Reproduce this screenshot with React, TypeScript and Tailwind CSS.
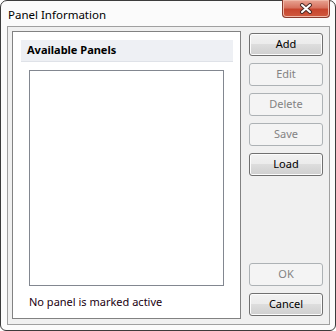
const font = { fontFamily: '"Noto Sans", "Open Sans", sans-serif' };

function Btn({ label, disabled }: { label: string; disabled?: boolean }) {
  return disabled ? (
    <div className="flex h-[23px] w-[74px] items-center justify-center rounded-[3px] border border-[#adb2b5] bg-[#f4f4f4] text-[11px] text-[#838383]">
      {label}
    </div>
  ) : (
    <div className="flex h-[23px] w-[74px] items-center justify-center rounded-[3px] border border-[#707070] bg-[linear-gradient(#f2f2f2_0%,#ebebeb_50%,#dddddd_50%,#cfcfcf_100%)] text-[11px] text-black shadow-[inset_0_0_0_1px_#fcfcfc]">
      {label}
    </div>
  );
}

function CloseButton() {
  return (
    <div className="flex h-[18px] w-[48px] items-center justify-center rounded-b-[4px] border border-t-0 border-[#8a3b2e] bg-[linear-gradient(#e8a493_0%,#d7725f_45%,#c7452e_55%,#d05a3f_100%)] shadow-[inset_0_0_0_1px_#f0b8a8]">
      <svg width="14" height="11" viewBox="0 0 14 11">
        <path d="M3 2 L11 9 M11 2 L3 9" stroke="#4a2a26" strokeWidth="4" strokeLinecap="round" />
        <path d="M3 2 L11 9 M11 2 L3 9" stroke="#ffffff" strokeWidth="2" strokeLinecap="round" />
      </svg>
    </div>
  );
}

export default function App() {
  return (
    <div style={font} className="h-[331px] w-[336px] bg-white">
      <div className="flex h-[331px] w-[336px] flex-col rounded-t-[7px] rounded-b-[6px] border border-[#3c3c3c] bg-[#fbfbfb] pb-[5px] pl-[6px] pr-[5px]">
        <div className="flex h-[28px] items-start justify-between">
          <div className="pl-[1px] pt-[5px] text-[11.5px] text-black">Panel Information</div>
          <div className="-mt-[1px]">
            <CloseButton />
          </div>
        </div>
        <div className="flex flex-1 border border-[#a0a0a0] bg-[#f0f0f0] pb-[5px] pl-[4px] pr-[6px] pt-[4px]">
          <div className="flex w-[229px] flex-col border border-[#828282] bg-white pb-[8px] pl-[8px] pr-[7px] pt-[8px]">
            <div className="flex h-[22px] items-center border-b border-[#dfe2e8] bg-[#eef0f4] pl-[6px] text-[11px] font-bold text-black">
              Available Panels
            </div>
            <div className="ml-[8px] mt-[8px] h-[216px] w-[195px] border border-[#828790] bg-white" />
            <div className="ml-[8px] mt-[8px] text-[11px] text-[#1a0010]">No panel is marked active</div>
          </div>
          <div className="ml-[8px] flex flex-col gap-[7px] pb-[3px] pt-[2px]">
            <Btn label="Add" />
            <Btn label="Edit" disabled />
            <Btn label="Delete" disabled />
            <Btn label="Save" disabled />
            <Btn label="Load" />
            <div className="flex-1" />
            <Btn label="OK" disabled />
            <Btn label="Cancel" />
          </div>
        </div>
      </div>
    </div>
  );
}
